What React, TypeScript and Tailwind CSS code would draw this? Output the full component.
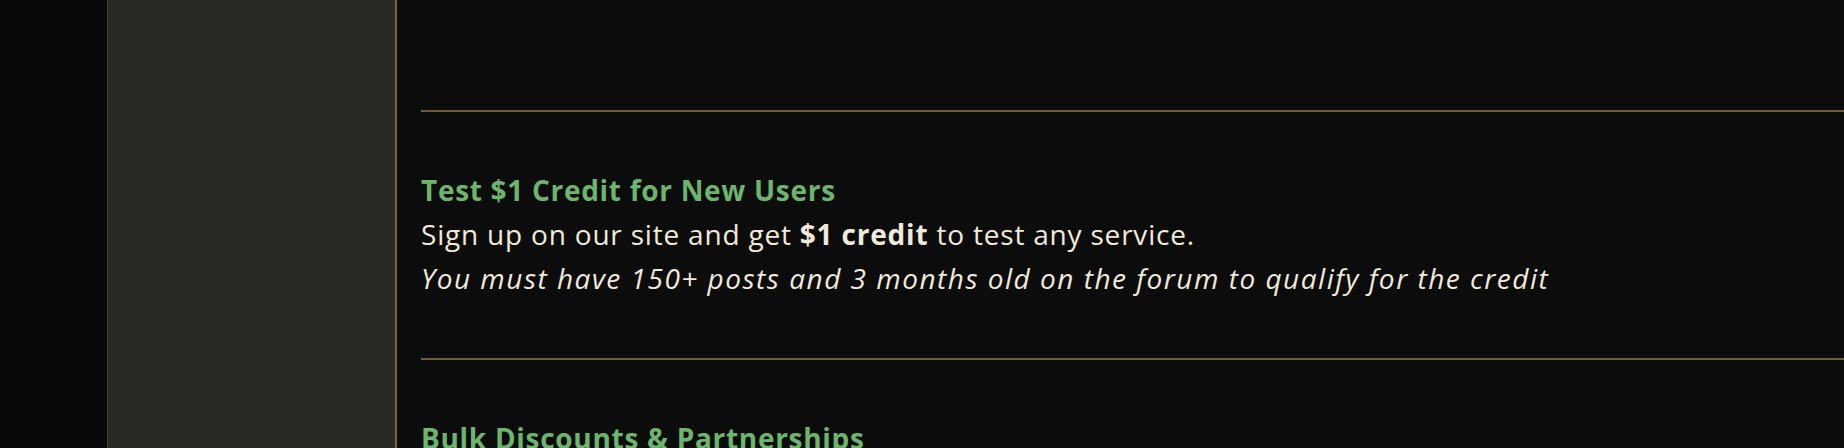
export default function App() {
  return (
    <div className="flex h-[448px] w-full overflow-hidden bg-[#090909] font-['Open_Sans',sans-serif]">
      <div className="w-[107px] shrink-0" />
      <aside className="w-[290px] shrink-0 border-l border-r-2 border-l-[#4a4128] border-r-[#75663a] bg-[#2a2925]" />
      <main className="flex-1 bg-[#0c0c0c] pl-[24px] text-[28px] leading-[44px] tracking-[0.8px] text-[#f0eadb]">
        <div className="-mt-[42px] pb-[108px]">
          <p>Order anything from our panel to support the shop and keep posting.</p>
        </div>
        <section className="border-t-2 border-[#6b5d36] pt-[56px] pb-[58px]">
          <h3 className="font-bold tracking-[0.7px] text-[#6db56d]">Test $1 Credit for New Users</h3>
          <p>
            Sign up on our site and get <strong className="font-bold">$1 credit</strong> to test any service.
          </p>
          <p className="italic tracking-[1.5px]">
            You must have 150+ posts and 3 months old on the forum to qualify for the credit
          </p>
        </section>
        <section className="border-t-2 border-[#6b5d36] pt-[56px]">
          <h3 className="font-bold tracking-[0.7px] text-[#6db56d]">Bulk Discounts &amp; Partnerships</h3>
        </section>
      </main>
    </div>
  );
}
